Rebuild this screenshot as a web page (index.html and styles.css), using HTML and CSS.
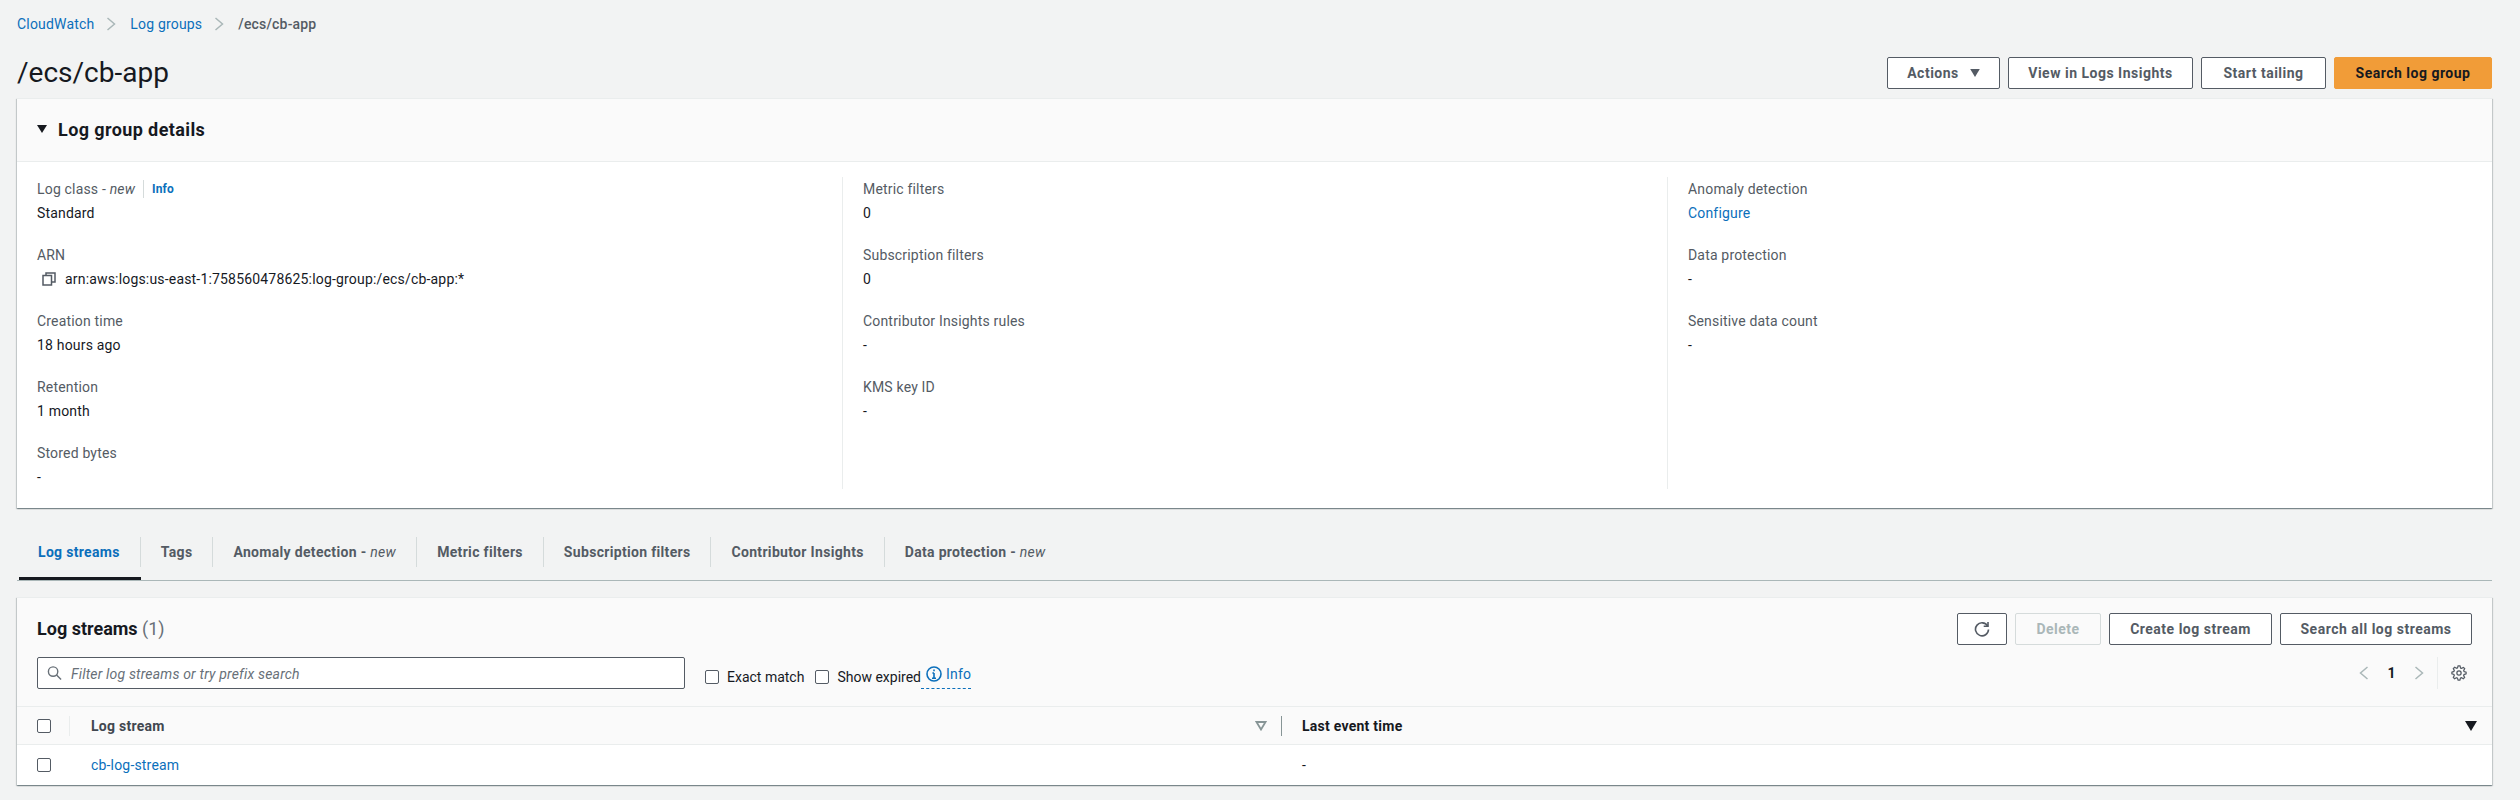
FILE: index.html
```html
<!DOCTYPE html>
<html lang="en">
<head>
<meta charset="utf-8">
<title>/ecs/cb-app</title>
<link rel="stylesheet" href="styles.css">
</head>
<body>
<div class="page">
  <nav class="crumbs">
    <a class="link">CloudWatch</a>
    <svg class="crumb-sep" viewBox="0 0 10 14"><path d="M1.5 1l7 6-7 6"/></svg>
    <a class="link">Log groups</a>
    <svg class="crumb-sep" viewBox="0 0 10 14"><path d="M1.5 1l7 6-7 6"/></svg>
    <span class="crumb-current">/ecs/cb-app</span>
  </nav>
  <header class="page-head">
    <h1 class="title">/ecs/cb-app</h1>
    <div class="actions">
      <button class="btn btn-actions">Actions <svg class="caret" viewBox="0 0 12 10"><path d="M0 0h12L6 10z"/></svg></button>
      <button class="btn btn-insights">View in Logs Insights</button>
      <button class="btn btn-tail">Start tailing</button>
      <button class="btn btn-primary">Search log group</button>
    </div>
  </header>

  <section class="card details">
    <div class="details-head">
      <svg class="disclosure" viewBox="0 0 10 8"><path d="M0 0h10L5 8z"/></svg>
      <h2 class="details-title">Log group details</h2>
    </div>
    <div class="details-body">
      <div class="col">
        <div class="field">
          <div class="label label-info"><span>Log class - <em>new</em></span><a class="info-link">Info</a></div>
          <div class="value">Standard</div>
        </div>
        <div class="field">
          <div class="label">ARN</div>
          <div class="value value-copy">
            <svg class="copy" viewBox="0 0 14 14"><path d="M4 3V1h9v9h-3"/><path d="M1 3.5h8.5V13H1z"/></svg>
            <span>arn:aws:logs:us-east-1:758560478625:log-group:/ecs/cb-app:*</span>
          </div>
        </div>
        <div class="field"><div class="label">Creation time</div><div class="value">18 hours ago</div></div>
        <div class="field"><div class="label">Retention</div><div class="value">1 month</div></div>
        <div class="field"><div class="label">Stored bytes</div><div class="value">-</div></div>
      </div>
      <div class="col">
        <div class="field"><div class="label">Metric filters</div><div class="value">0</div></div>
        <div class="field"><div class="label">Subscription filters</div><div class="value">0</div></div>
        <div class="field"><div class="label">Contributor Insights rules</div><div class="value">-</div></div>
        <div class="field"><div class="label">KMS key ID</div><div class="value">-</div></div>
      </div>
      <div class="col">
        <div class="field"><div class="label">Anomaly detection</div><div class="value"><a class="link">Configure</a></div></div>
        <div class="field"><div class="label">Data protection</div><div class="value">-</div></div>
        <div class="field"><div class="label">Sensitive data count</div><div class="value">-</div></div>
      </div>
    </div>
  </section>

  <div class="tabs">
    <div class="tab tab-active"><span class="tab-label">Log streams</span></div>
    <div class="tab"><span class="tab-label">Tags</span></div>
    <div class="tab"><span class="tab-label">Anomaly detection - <em class="tab-new">new</em></span></div>
    <div class="tab"><span class="tab-label">Metric filters</span></div>
    <div class="tab"><span class="tab-label">Subscription filters</span></div>
    <div class="tab"><span class="tab-label">Contributor Insights</span></div>
    <div class="tab"><span class="tab-label tab-last">Data protection - <em class="tab-new">new</em></span></div>
  </div>

  <section class="card streams">
    <div class="streams-top">
      <div class="streams-title-row">
        <h2 class="streams-title">Log streams <span class="count">(1)</span></h2>
        <div class="actions actions-streams">
          <button class="btn btn-icon" aria-label="Refresh">
            <svg class="refresh" viewBox="0 0 16 16"><path d="M13.6 5A6.500 6.500 0 1 0 14.500 8.500"/><path d="M14 1v4.300H9.700"/></svg>
          </button>
          <button class="btn btn-disabled">Delete</button>
          <button class="btn btn-create">Create log stream</button>
          <button class="btn btn-searchall">Search all log streams</button>
        </div>
      </div>
      <div class="filter-row">
        <div class="search">
          <svg class="search-icon" viewBox="0 0 16 16"><circle cx="6.500" cy="6.500" r="5"/><path d="M10.200 10.200L15 15"/></svg>
          <span class="placeholder">Filter log streams or try prefix search</span>
        </div>
        <label class="check check-exact"><span class="box"></span>Exact match</label>
        <label class="check check-expired"><span class="box"></span>Show expired</label>
        <a class="info-dotted">
          <svg class="info-icon" viewBox="0 0 16 16"><circle cx="8" cy="8" r="7"/><path d="M8 7v5M6 12.200h4M6.400 7h1.600"/><path d="M8 3.600v1.600"/></svg>Info
        </a>
        <div class="pager">
          <svg class="pager-chev" viewBox="0 0 10 14"><path d="M8.500 1l-7 6 7 6"/></svg>
          <span class="page-num">1</span>
          <svg class="pager-chev" viewBox="0 0 10 14"><path d="M1.500 1l7 6-7 6"/></svg>
          <span class="pager-div">
            <svg class="gear" viewBox="-1 -1 18 18"><path d="M13.300 5.200l1.100-2.100-1.400-1.400-2.100 1.100c-.3-.2-.7-.3-1.100-.4L9.100 0H7l-.7 2.300c-.4.100-.7.200-1 .4L3.100 1.600 1.600 3.100l1.100 2.100c-.2.300-.3.700-.4 1L0 7v2l2.300.7c.1.400.3.700.4 1.100L1.600 13 3 14.400l2.100-1.100c.3.200.7.300 1.100.4L7 16h2l.7-2.300c.4-.1.700-.3 1.100-.4l2.100 1.100 1.400-1.400-1.100-2.100c.2-.3.3-.7.400-1.100L16 9V7l-2.300-.7c-.1-.4-.3-.7-.4-1.100z"/><circle cx="8" cy="8" r="2.400"/></svg>
          </span>
        </div>
      </div>
    </div>
    <div class="thead">
      <div class="cell-check cell-check-head"><span class="box"></span></div>
      <div class="cell-name th">Log stream
        <svg class="sort-hollow" viewBox="0 0 12 10"><path d="M1.500 1h9L6 8.500z"/></svg>
      </div>
      <div class="cell-time th">Last event time
        <svg class="sort-solid" viewBox="0 0 12 10"><path d="M0 0h12L6 10z"/></svg>
      </div>
    </div>
    <div class="trow">
      <div class="cell-check"><span class="box"></span></div>
      <div class="cell-name"><a class="link">cb-log-stream</a></div>
      <div class="cell-time">-</div>
    </div>
  </section>
</div>
</body>
</html>
```
FILE: styles.css
```css
* { box-sizing: border-box; }
html, body { margin: 0; }
body {
  background: #f2f3f3;
  color: #16191f;
  font-family: Roboto, "Noto Sans", "Liberation Sans", sans-serif;
  font-size: 14px;
  line-height: 24px;
  letter-spacing: .18px;
}
.page { padding: 0 28px 15px 17px; }
.link { color: #0b6fbb; text-decoration: none; }

/* breadcrumbs */
.crumbs { display: flex; align-items: center; height: 48px; }
.crumb-sep { width: 10px; height: 14px; margin: 0 14px 0 12px; fill: none; stroke: #aab7b8; stroke-width: 1.5; }
.crumb-current { color: #545b64; font-weight: 500; }

/* header */
.page-head { display: flex; align-items: center; justify-content: space-between; margin-top: 9px; height: 32px; }
.title { margin: 0 0 1px; font-size: 28px; font-weight: 400; line-height: 32px; letter-spacing: 0; }
.actions { display: flex; gap: 8px; }
.btn {
  display: flex; align-items: center; justify-content: center;
  height: 32px; padding: 0;
  background: #fff; border: 1px solid #545b64; border-radius: 2px;
  color: #545b64; font: 700 14px/20px Roboto, "Noto Sans", sans-serif; letter-spacing: .5px;
}
.btn-actions { width: 113px; gap: 11px; }
.btn-insights { width: 185px; }
.btn-tail { width: 125px; }
.btn-primary { width: 158px; background: #f19c38; border-color: #f19c38; color: #16191f; }
.btn-icon { width: 50px; }
.btn-disabled { width: 86px; background: transparent; border-color: #d5dbdb; color: #aab7b8; }
.btn-create { width: 163px; }
.btn-searchall { width: 192px; }
.caret { width: 10px; height: 8px; fill: #545b64; }

/* cards */
.card {
  background: #fff;
  border-top: 1px solid #eaeded;
  box-shadow: 0 1px 1px 0 rgba(0,28,36,.3), 1px 1px 1px 0 rgba(0,28,36,.15), -1px 1px 1px 0 rgba(0,28,36,.15);
}
.details { margin-top: 9px; height: 410px; }
.details-head {
  display: flex; align-items: center; gap: 11px;
  height: 63px; padding-left: 20px;
  background: #fafafa; border-bottom: 1px solid #eaeded;
}
.disclosure { width: 10px; height: 8px; fill: #16191f; margin-bottom: 2px; }
.details-title { margin: 0; font-size: 18px; font-weight: 700; line-height: 22px; letter-spacing: .4px; }
.details-body { display: grid; grid-template-columns: repeat(3, 1fr); padding-top: 15px; }
.col { height: 312px; padding-left: 20px; }
.col + .col { border-left: 1px solid #eaeded; }
.field { height: 66px; }
.label { color: #545b64; }
.label-info { display: flex; align-items: center; }
.label em { font-style: italic; }
.info-link {
  margin-left: 8px; padding-left: 8px; height: 18px;
  border-left: 1px solid #d5dbdb;
  color: #0b6fbb; font-size: 12px; font-weight: 700; line-height: 18px; letter-spacing: .1px;
}
.value-copy { display: flex; align-items: center; gap: 9px; padding-left: 5px; }
.copy { width: 14px; height: 14px; fill: none; stroke: #545b64; stroke-width: 1.5; }

/* tabs */
.tabs { display: flex; height: 44px; margin-top: 29px; border-bottom: 1px solid #aab7b8; }
.tab { height: 43px; }
.tab-active { margin-left: 2px; border-bottom: 3px solid #16191f; }
.tab-label {
  display: block; height: 30px; padding: 0 20px;
  border-right: 1px solid #d5dbdb;
  color: #545b64; font-weight: 700; line-height: 30px; letter-spacing: .32px;
}
.tab-active .tab-label { color: #0b6fbb; padding-left: 19px; }
.tab-last { border-right: 0; }
.tab-new { font-weight: 400; }

/* streams card */
.streams { margin-top: 16px; height: 188px; }
.streams-top { height: 108px; padding: 15px 20px 0; background: #fafafa; }
.streams-title-row { display: flex; align-items: center; justify-content: space-between; height: 32px; }
.streams-title { margin: 0; font-size: 18px; font-weight: 700; line-height: 24px; letter-spacing: 0; }
.count { color: #687078; font-weight: 400; }
.refresh { width: 16px; height: 16px; fill: none; stroke: #545b64; stroke-width: 1.6; }

.filter-row { display: flex; align-items: center; height: 32px; margin-top: 12px; }
.search {
  display: flex; align-items: center; gap: 9px;
  width: 648px; height: 32px; padding-left: 9px;
  background: #fff; border: 1px solid #545b64; border-radius: 2px;
}
.search-icon { width: 15px; height: 16px; fill: none; stroke: #687078; stroke-width: 1.5; }
.placeholder { color: #687078; font-style: italic; padding-top: 1px; }
.check { display: flex; align-items: center; gap: 8px; height: 20px; margin-top: 8px; letter-spacing: 0; }
.check-exact { margin-left: 20px; }
.check-expired { margin-left: 11px; }
.box { display: block; width: 14px; height: 14px; background: #fff; border: 1px solid #545b64; border-radius: 2px; }
.info-dotted {
  display: flex; align-items: center; gap: 4px;
  height: 32px; margin-left: 0; padding-left: 5px;
  border-bottom: 1px dashed #0b6fbb;
  color: #0b6fbb; line-height: 26px; padding-top: 2px;
}
.info-icon { width: 16px; height: 16px; fill: none; stroke: #0b6fbb; stroke-width: 1.600; }
.pager { display: flex; align-items: center; margin-left: auto; height: 32px; }
.pager-chev { width: 10px; height: 14px; fill: none; stroke: #aab7b8; stroke-width: 1.5; }
.page-num { width: 45px; text-align: center; font-weight: 700; }
.pager-div { display: flex; align-items: center; height: 32px; margin-left: 13px; padding: 0 5px 0 13px; border-left: 1px solid #eaeded; }
.gear { width: 16px; height: 16px; fill: none; stroke: #545b64; stroke-width: 1.4; }

/* table */
.thead, .trow { display: grid; grid-template-columns: 74px 1191px 1fr; align-items: center; border-top: 1px solid #eaeded; }
.thead { height: 38px; background: #fafafa; }
.trow { height: 41px; }
.cell-check { padding-left: 20px; }
.cell-check-head { height: 20px; border-right: 1px solid #eaeded; margin-right: 21px; padding-top: 3px; width: 53px; }
.cell-time { padding-left: 20px; }
.th { display: flex; align-items: center; justify-content: space-between; font-weight: 700; color: #414750; letter-spacing: .25px; }
.cell-name.th { height: 20px; padding-right: 14px; border-right: 1px solid #879596; }
.cell-time.th { color: #16191f; padding-right: 15px; }
.sort-hollow { width: 12px; height: 10px; fill: none; stroke: #879596; stroke-width: 1.800; }
.sort-solid { width: 12px; height: 10px; fill: #16191f; }
```
